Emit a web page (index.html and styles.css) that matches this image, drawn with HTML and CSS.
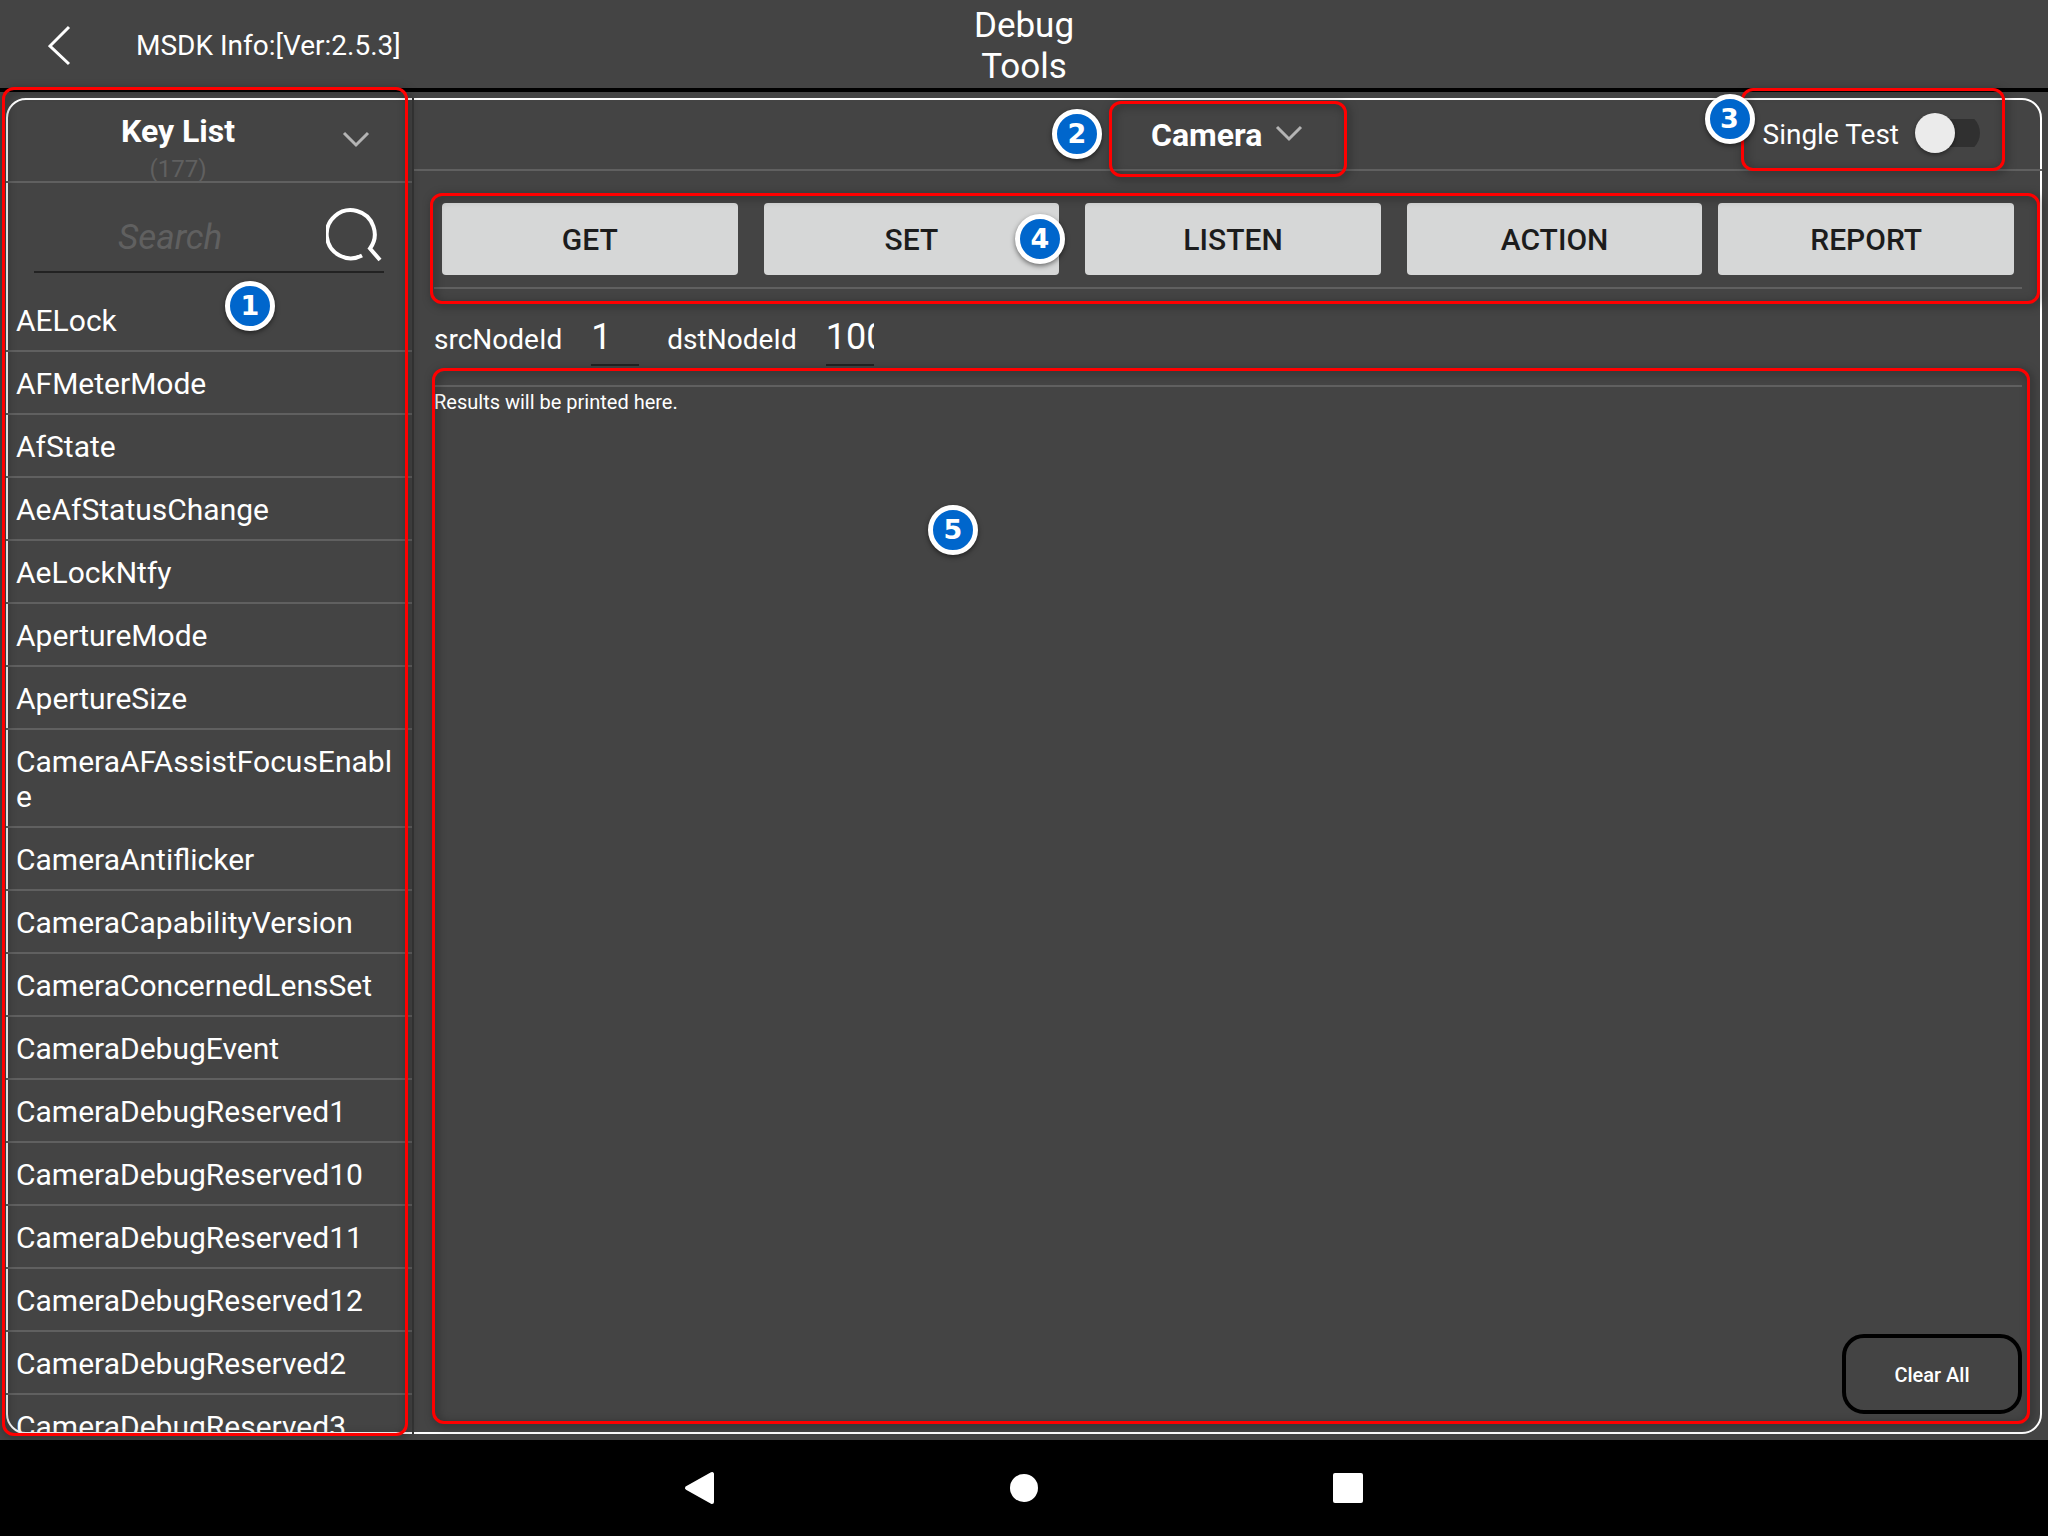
FILE: index.html
```html
<!DOCTYPE html>
<html lang="en">
<head>
<meta charset="utf-8">
<meta name="viewport" content="width=device-width, initial-scale=1">
<title>Debug Tools</title>
<link rel="stylesheet" href="styles.css">
</head>
<body>
<header class="topbar">
  <div class="topbar-start">
    <button class="icon-button back" type="button" aria-label="Back">
      <svg width="24" height="42" viewBox="0 0 24 42" fill="none" stroke="#fff" stroke-width="3"><path d="M21 2 2 21l19 18"/></svg>
    </button>
    <span class="version">MSDK Info:[Ver:2.5.3]</span>
  </div>
  <h1 class="title">Debug<br>Tools</h1>
</header>

<div class="stage">
  <div class="panel">
    <aside class="sidebar">
      <div class="list-head">
        <h2 class="list-title">Key List</h2>
        <span class="list-count">(177)</span>
        <button class="icon-button list-toggle" type="button" aria-label="Change key list">
          <svg width="28" height="18" viewBox="0 0 28 18" fill="none" stroke="#b4b4b4" stroke-width="3"><path d="M2 3l12 12L26 3"/></svg>
        </button>
      </div>
      <div class="search">
        <input class="search-input" type="text" placeholder="Search" aria-label="Search keys">
        <button class="icon-button" type="button" aria-label="Search">
          <svg width="58" height="60" viewBox="0 0 58 60" fill="none" stroke="#fff" stroke-width="4"><path d="M36 53.400A24 24 0 1 1 44 46.500L54 58"/></svg>
        </button>
      </div>
      <ul class="keys">
        <li>AELock</li>
        <li>AFMeterMode</li>
        <li>AfState</li>
        <li>AeAfStatusChange</li>
        <li>AeLockNtfy</li>
        <li>ApertureMode</li>
        <li>ApertureSize</li>
        <li>CameraAFAssistFocusEnable</li>
        <li>CameraAntiflicker</li>
        <li>CameraCapabilityVersion</li>
        <li>CameraConcernedLensSet</li>
        <li>CameraDebugEvent</li>
        <li>CameraDebugReserved1</li>
        <li>CameraDebugReserved10</li>
        <li>CameraDebugReserved11</li>
        <li>CameraDebugReserved12</li>
        <li>CameraDebugReserved2</li>
        <li>CameraDebugReserved3</li>
      </ul>
      <div class="mark mark-list"></div>
      <span class="badge badge-list">1</span>
    </aside>

    <main class="main">
      <div class="main-head">
        <div class="module">
          <select class="module-select" aria-label="Module">
            <option>Camera</option>
          </select>
          <svg class="module-arrow" width="28" height="18" viewBox="0 0 28 18" fill="none" stroke="#b4b4b4" stroke-width="3"><path d="M2 3l12 12L26 3"/></svg>
          <div class="mark mark-module"></div>
          <span class="badge badge-module">2</span>
        </div>
        <div class="single">
          <label for="single-test">Single Test</label>
          <input class="switch" type="checkbox" id="single-test">
          <div class="mark mark-single"></div>
          <span class="badge badge-single">3</span>
        </div>
      </div>

      <div class="content">
        <div class="actions">
          <button class="action" type="button">GET</button>
          <button class="action" type="button">SET</button>
          <button class="action" type="button">LISTEN</button>
          <button class="action" type="button">ACTION</button>
          <button class="action" type="button">REPORT</button>
          <div class="mark mark-actions"></div>
          <span class="badge badge-actions">4</span>
        </div>
        <div class="nodes">
          <label for="src">srcNodeId</label>
          <input class="node-input" id="src" type="text" value="1">
          <label for="dst">dstNodeId</label>
          <input class="node-input" id="dst" type="text" value="100">
        </div>
        <div class="results">
          <p class="output">Results will be printed here.</p>
          <button class="clear" type="button">Clear All</button>
          <div class="mark mark-results"></div>
          <span class="badge badge-results">5</span>
        </div>
      </div>
    </main>
  </div>
</div>

<nav class="system-nav" aria-label="System">
  <button class="icon-button" type="button" aria-label="Back">
    <svg width="32" height="34" viewBox="0 0 32 34" fill="#fff" stroke="#fff" stroke-width="4" stroke-linejoin="round"><path d="M28 3v28L3 17z"/></svg>
  </button>
  <button class="icon-button" type="button" aria-label="Home">
    <svg width="28" height="28" viewBox="0 0 28 28" fill="#fff"><circle cx="14" cy="14" r="14"/></svg>
  </button>
  <button class="icon-button" type="button" aria-label="Recent apps">
    <svg width="30" height="30" viewBox="0 0 30 30" fill="#fff"><rect width="30" height="30" rx="2"/></svg>
  </button>
</nav>
</body>
</html>
```
FILE: styles.css
```css
* {
  box-sizing: border-box;
}

body {
  display: flex;
  flex-direction: column;
  height: 100vh;
  margin: 0;
  background: #444;
  color: #fff;
  font-family: Roboto, "Liberation Sans", sans-serif;
  font-size: 28px;
}

button,
input,
select {
  margin: 0;
  padding: 0;
  border: 0;
  background: none;
  color: inherit;
  font: inherit;
}

input:focus,
select:focus {
  outline: none;
}

.icon-button {
  display: flex;
  align-items: center;
  justify-content: center;
}

/* Top bar */
.topbar {
  display: grid;
  grid-template-columns: 1fr auto 1fr;
  align-items: center;
  height: 92px;
  padding-top: 3px;
  border-bottom: 4px solid #000;
}

.topbar-start {
  display: flex;
  align-items: center;
  gap: 64px;
  padding-left: 48px;
}

.title {
  margin: 0;
  font-size: 35px;
  font-weight: 400;
  line-height: 41px;
  text-align: center;
}

/* Framed panel */
.stage {
  display: flex;
  flex: 1;
  min-height: 0;
  padding: 6px;
}

.panel {
  display: flex;
  flex: 1;
  min-width: 0;
  border: 2px solid #fff;
  border-radius: 20px;
}

/* Key list; its rules run over the panel frame */
.sidebar {
  position: relative;
  display: flex;
  flex-direction: column;
  width: 408px;
  margin: -2px 0 -2px -2px;
  padding: 2px 0;
  border-right: 2px solid #363636;
}

.list-head {
  position: relative;
  display: flex;
  flex-direction: column;
  align-items: center;
  height: 83px;
  padding: 11px 62px 0 0;
  border-bottom: 2px solid #606060;
  overflow: hidden;
}

.list-title {
  margin: 0;
  font-size: 32px;
  font-weight: 700;
  line-height: 41px;
}

.list-count {
  color: #606060;
  font-size: 24px;
  line-height: 34px;
}

.list-toggle {
  position: absolute;
  top: 30px;
  right: 42px;
}

.search {
  display: flex;
  align-items: center;
  height: 90px;
  margin: 0 28px;
  padding-top: 10px;
  border-bottom: 2px solid #222;
}

.search-input {
  flex: 1;
  min-width: 0;
  padding: 10px 0 0 84px;
  font-size: 35px;
  font-style: italic;
}

.search-input::placeholder {
  color: #606060;
  opacity: 1;
}

.keys {
  flex: 1;
  min-height: 0;
  margin: 0;
  padding: 16px 0 0;
  list-style: none;
  overflow-y: auto;
  scrollbar-width: none;
}

.keys li {
  padding: 14px 10px 12px;
  border-bottom: 2px solid #606060;
  font-size: 30px;
  line-height: 35px;
  word-break: break-all;
}

/* Main column */
.main {
  display: flex;
  flex: 1;
  flex-direction: column;
  min-width: 0;
  margin-right: -2px;
}

.main-head {
  display: grid;
  grid-template-columns: 1fr auto 1fr;
  align-items: center;
  height: 71px;
  border-bottom: 2px solid #606060;
}

.module {
  position: relative;
  display: flex;
  grid-column: 2;
  align-items: center;
}

.module-select {
  width: 154px;
  padding: 1px 38px 0 0;
  appearance: none;
  font-size: 32px;
  font-weight: 700;
  line-height: 41px;
}

.module-arrow {
  margin: 0 2px 4px -30px;
  pointer-events: none;
}

.single {
  position: relative;
  display: flex;
  align-items: center;
  justify-self: end;
  gap: 16px;
  padding: 0 62px 3px 0;
}

.single label {
  padding-top: 2px;
}

.switch {
  display: flex;
  align-items: center;
  width: 65px;
  height: 40px;
  appearance: none;
  background: linear-gradient(#303030, #303030) center / 100% 28px no-repeat;
  border-radius: 20px;
}

.switch::before {
  width: 40px;
  height: 40px;
  border-radius: 50%;
  background: #ebebeb;
  box-shadow: 0 2px 4px rgba(0, 0, 0, 0.4);
  content: "";
}

.switch:checked::before {
  margin-left: auto;
}

.content {
  display: flex;
  flex: 1;
  flex-direction: column;
  min-height: 0;
  padding: 32px 20px 18px;
}

.actions {
  position: relative;
  display: flex;
  gap: 26px;
  padding: 0 8px 12px;
  border-bottom: 2px solid #606060;
}

.action {
  flex: 1;
  height: 72px;
  border-radius: 4px;
  background: #d6d7d7;
  color: #1c1c1c;
  font-size: 30px;
  font-weight: 500;
}

.action:nth-child(5) {
  margin-left: -10px;
}

.nodes {
  display: flex;
  align-items: baseline;
  height: 96px;
  padding-top: 24px;
}

.node-input {
  width: 48px;
  height: 53px;
  margin: 0 28px 0 29px;
  padding-bottom: 3px;
  border-bottom: 2px solid #222;
  font-size: 36px;
}

.results {
  position: relative;
  display: flex;
  flex: 1;
  flex-direction: column;
  justify-content: space-between;
  border-top: 2px solid #606060;
}

.output {
  margin: 3px 0 0;
  font-size: 20px;
  line-height: 24px;
}

.clear {
  align-self: flex-end;
  width: 180px;
  height: 80px;
  padding-top: 2px;
  border: 4px solid #000;
  border-radius: 22px;
  font-size: 20px;
  font-weight: 500;
}

/* Call-outs laid over the screen */
.mark {
  position: absolute;
  border: 3px solid #f00;
  border-radius: 12px;
  filter: drop-shadow(2px 2px 4px rgba(0, 0, 0, 0.5));
  pointer-events: none;
}

.badge {
  position: absolute;
  display: flex;
  align-items: center;
  justify-content: center;
  width: 50px;
  height: 50px;
  border: 5px solid #fff;
  border-radius: 50%;
  background: #06c;
  box-shadow: 0 2px 5px rgba(0, 0, 0, 0.5);
  color: #fff;
  font-family: "DejaVu Sans", sans-serif;
  font-size: 27px;
  font-weight: 700;
  line-height: 40px;
}

.mark-list {
  inset: -11px 4px -2px -4px;
}

.badge-list {
  top: 183px;
  left: 219px;
}

.mark-module {
  inset: -13px -42px -21px;
}

.badge-module {
  top: -5px;
  left: -99px;
}

.mark-single {
  inset: -25px 37px -15px -22px;
}

.badge-single {
  top: -19px;
  left: -58px;
}

.mark-actions {
  inset: -10px -18px -17px -4px;
}

.badge-actions {
  top: 11px;
  left: 581px;
}

.mark-results {
  inset: -19px -8px -10px -2px;
}

.badge-results {
  top: 118px;
  left: 494px;
}

/* System navigation */
.system-nav {
  display: flex;
  justify-content: center;
  height: 96px;
  background: #000;
}

.system-nav .icon-button {
  width: 324px;
}
```
